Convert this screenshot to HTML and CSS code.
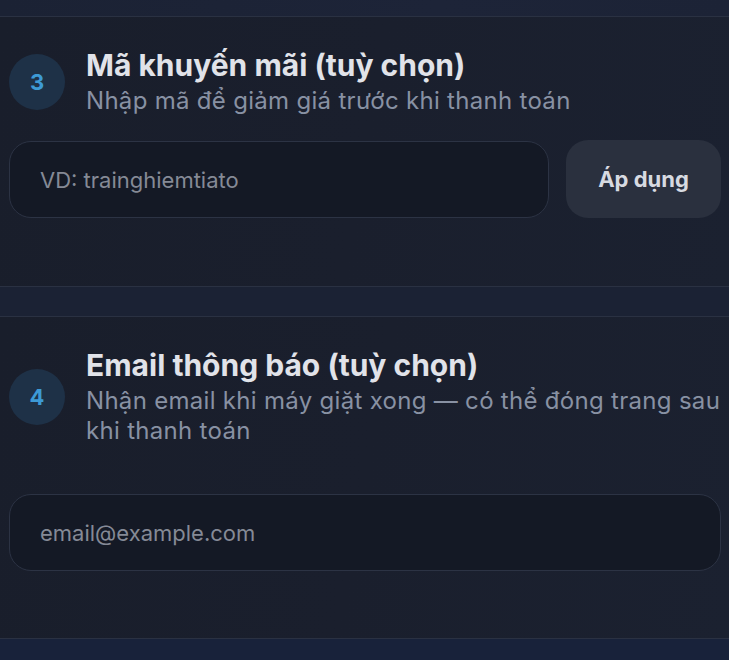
FILE: index.html
```html
<!DOCTYPE html>
<html lang="vi">
<head>
<meta charset="utf-8">
<title>Thanh toán</title>
<link rel="stylesheet" href="styles.css">
</head>
<body>
<div class="page">
  <div class="prev"></div>
  <section class="card card-promo">
    <div class="head">
      <div class="badge">3</div>
      <div class="head-text">
        <h2 class="title">Mã khuyến mãi (tuỳ chọn)</h2>
        <p class="sub">Nhập mã để giảm giá trước khi thanh toán</p>
      </div>
    </div>
    <div class="row">
      <input class="field" type="text" placeholder="VD: trainghiemtiato">
      <button class="apply" type="button">Áp dụng</button>
    </div>
  </section>
  <div class="spacer"></div>
  <section class="card card-email">
    <div class="head">
      <div class="badge">4</div>
      <div class="head-text">
        <h2 class="title">Email thông báo (tuỳ chọn)</h2>
        <p class="sub">Nhận email khi máy giặt xong — có thể đóng trang sau khi thanh toán</p>
      </div>
    </div>
    <div class="row row-email">
      <input class="field" type="email" placeholder="email@example.com">
    </div>
  </section>
  <div class="next"></div>
</div>
</body>
</html>
```

FILE: styles.css
```css
* { box-sizing: border-box; }
html, body { margin: 0; padding: 0; }
body {
  background: #1b2233;
  font-family: Inter, "Noto Sans", "Liberation Sans", sans-serif;
  overflow: hidden;
}
.page { width: 729px; height: 660px; overflow: hidden; }
.prev {
  height: 16px;
  background: linear-gradient(90deg, #1b2234, #1d2438 60%, #1c2336);
}
.card {
  background: linear-gradient(100deg, #191e2b 0%, #1a1f2d 50%, #1b2130 100%);
  border-top: 1px solid #2a3142;
  border-bottom: 1px solid #2a3142;
  padding: 30px 8px 0 9px;
}
.card-promo { height: 271px; }
.card-email { height: 323px; }
.spacer { height: 29px; background: #1b2234; }
.next { height: 40px; background: #18223a; }
.head {
  display: flex;
  align-items: center;
  gap: 21px;
  margin-right: -8px;
}
.badge {
  flex: 0 0 56px;
  width: 56px;
  height: 56px;
  border-radius: 50%;
  background: #1e3147;
  color: #3d9ad6;
  font-weight: 700;
  font-size: 22px;
  display: flex;
  align-items: center;
  justify-content: center;
}
.head-text { flex: 1; min-width: 0; }
.title {
  margin: 0;
  font-size: 30px;
  line-height: 36px;
  font-weight: 700;
  color: #e1e3e9;
}
.sub {
  margin: 3px 0 0;
  font-size: 24px;
  line-height: 30px;
  letter-spacing: 0.3px;
  color: #8891a3;
}
.row {
  display: flex;
  gap: 17px;
  margin-top: 25px;
  height: 77px;
}
.row-email { margin-top: 48px; }
.field {
  flex: 1;
  min-width: 0;
  height: 77px;
  border: 1px solid #2c3344;
  border-radius: 22px;
  background: #141925;
  padding: 0 30px;
  font-family: inherit;
  font-size: 22px;
  color: #e1e3e9;
  outline: none;
}
.field::placeholder { color: #858a96; }
.apply {
  flex: 0 0 155px;
  height: 78px;
  margin-top: -1px;
  border: none;
  border-radius: 22px;
  background: #2a303e;
  color: #d7dae1;
  font-family: inherit;
  font-weight: 700;
  font-size: 22px;
}
```
